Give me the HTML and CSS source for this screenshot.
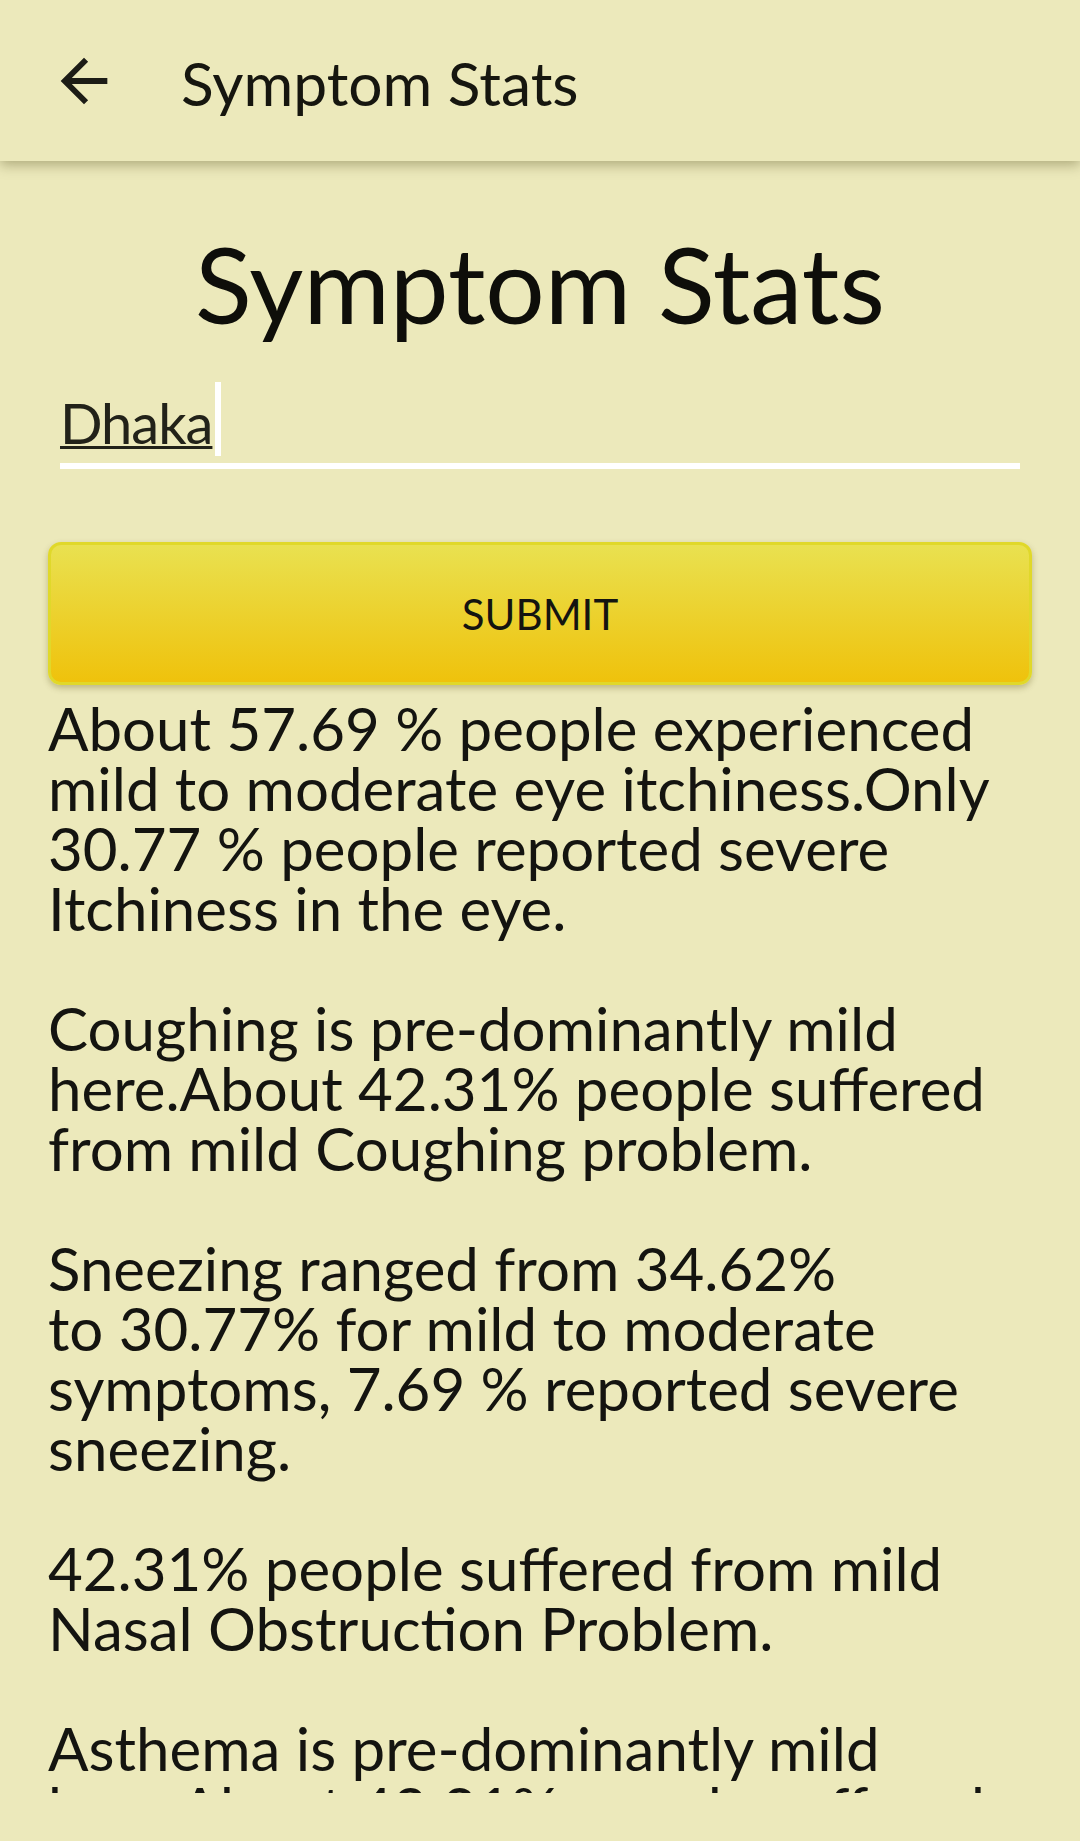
FILE: index.html
```html
<!DOCTYPE html>
<html>
<head>
<meta charset="utf-8">
<link rel="stylesheet" href="styles.css">
</head>
<body>
<div class="screen">
  <header class="appbar">
    <svg class="back" viewBox="0 0 24 24" width="70" height="70"><path d="M20 11H7.83l5.59-5.59L12 4l-8 8 8 8 1.41-1.41L7.83 13H20v-2z" fill="#1c1c16"/></svg>
    <span class="appbar-title">Symptom Stats</span>
  </header>
  <main class="content">
    <h1 class="heading">Symptom Stats</h1>
    <div class="field"><span class="field-text">Dhaka</span><span class="cursor"></span></div>
    <button class="submit">SUBMIT</button>
    <div class="stats">
      <p>About 57.69 % people experienced<br>mild to moderate eye itchiness.Only<br>30.77 % people reported severe<br>Itchiness in the eye.</p>
      <p>Coughing is pre-dominantly mild<br>here.About 42.31% people suffered<br>from mild Coughing problem.</p>
      <p>Sneezing ranged from 34.62%<br>to 30.77% for mild to moderate<br>symptoms, 7.69 % reported severe<br>sneezing.</p>
      <p>42.31% people suffered from mild<br>Nasal Obstruction Problem.</p>
      <p>Asthema is pre-dominantly mild<br>here.About 42.31% people suffered<br>from mild Asthema problem.</p>
    </div>
  </main>
</div>
</body>
</html>
```
FILE: styles.css
```css
html, body {
  margin: 0;
  padding: 0;
  background: #ece9bb;
}
body {
  font-family: Lato, "Open Sans", sans-serif;
  color: #141410;
}
.screen {
  width: 1080px;
  height: 1841px;
  overflow: hidden;
}
.appbar {
  position: relative;
  z-index: 2;
  height: 161px;
  background: #ece9bb;
  display: flex;
  align-items: center;
  box-shadow: 0 4px 12px rgba(60, 55, 10, 0.35);
}
.back {
  margin-left: 49px;
  flex: none;
}
.appbar-title {
  margin-left: 62px;
  font-size: 60.5px;
  line-height: 72px;
  color: #16160f;
  margin-top: 4px;
}
.content {
  height: 1632px;
  overflow: hidden;
  padding: 0 48px;
}
.heading {
  margin: 59px 0 0;
  font-size: 105px;
  font-weight: 400;
  line-height: 126px;
  text-align: center;
  color: #0e0e0a;
}
.field {
  margin: 36px 12px 0;
  font-size: 56px;
  letter-spacing: -1px;
  line-height: 74px;
  padding-bottom: 3px;
  border-bottom: 6px solid #ffffff;
  color: #222219;
}
.field-text {
  text-decoration: underline;
  text-decoration-thickness: 3px;
  text-underline-offset: 2px;
}
.cursor {
  display: inline-block;
  width: 6px;
  height: 74px;
  background: #ffffff;
  vertical-align: -12px;
  margin-left: 3px;
}
.submit {
  display: block;
  width: 100%;
  height: 143px;
  margin: 73px 0 0;
  border: 3px solid #e0d82a;
  border-radius: 13px;
  background: linear-gradient(#e9e150, #efc20c);
  box-shadow: 0 3px 6px rgba(80, 70, 0, 0.3);
  font-family: Lato, sans-serif;
  font-size: 42px;
  color: #141410;
  padding: 0;
}
.stats {
  margin-top: 13px;
  font-size: 60px;
  line-height: 60px;
  white-space: nowrap;
}
.stats p {
  margin: 0 0 60px;
}
```
